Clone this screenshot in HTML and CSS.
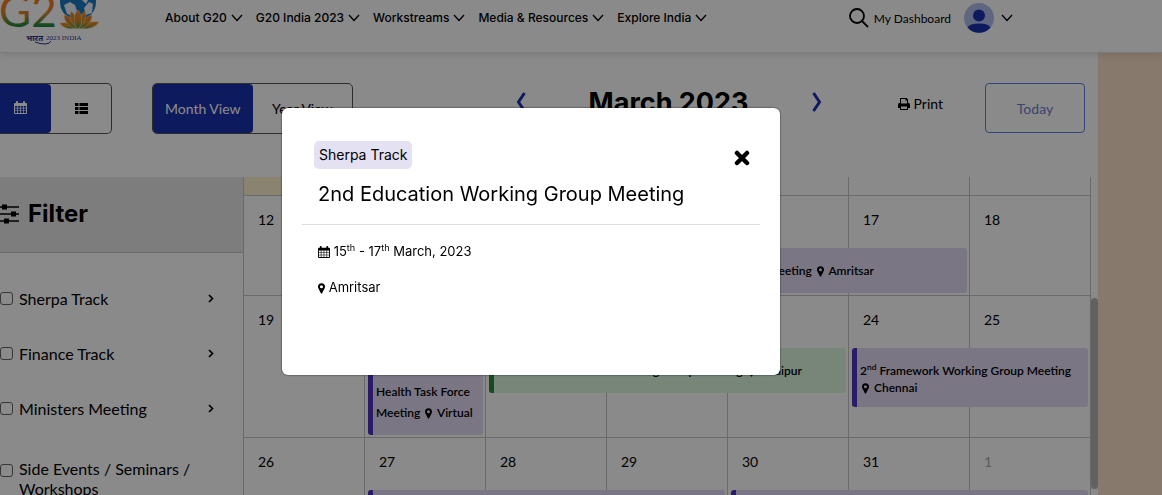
FILE: index.html
```
<!DOCTYPE html>
<html lang="en">
<head>
  <meta charset="UTF-8">
  <title>G20 Calendar</title>
  <link rel="stylesheet" href="styles.css">
</head>
<body>

<!-- shared icons -->
<svg class="sprite" width="0" height="0">
  <symbol id="chevron" viewBox="0 0 12 8"><path d="M1 1l5 5.500l5-5.500" fill="none" stroke="currentColor" stroke-width="1.300"/></symbol>
  <symbol id="pin" viewBox="0 0 8 12"><path fill-rule="evenodd" d="M4 0a4 4 0 0 1 4 4c0 1-.3 1.700-.7 2.400L4.700 11.500q-.7.900-1.400 0L.7 6.400C.3 5.700 0 5 0 4a4 4 0 0 1 4-4zM4 2.200a1.800 1.800 0 1 0 0 3.600a1.800 1.800 0 0 0 0-3.600z" fill="currentColor"/></symbol>
  <symbol id="calendar" viewBox="0 0 13 13"><path fill-rule="evenodd" d="M1 2h1V.8q0-.8 1-.8t1 .8V2h5V.8q0-.8 1-.8t1 .8V2h1q1 0 1 1v9q0 1-1 1H1q-1 0-1-1V3q0-1 1-1zM1 5v1.700h2V5zM3.700 5v1.700h2.400V5zM6.800 5v1.700h2.400V5zM9.900 5v1.700H12V5zM1 7.400v2h2v-2zM3.700 7.400v2h2.400v-2zM6.800 7.400v2h2.400v-2zM9.900 7.400v2H12v-2zM1 10.100V12h2v-1.900zM3.700 10.100V12h2.400v-1.900zM6.800 10.100V12h2.400v-1.900zM9.900 10.100V12H12v-1.900z" fill="currentColor"/></symbol>
  <symbol id="angle" viewBox="0 0 6 9"><path d="M1 1l3.500 3.500L1 8" fill="none" stroke="currentColor" stroke-width="1.700"/></symbol>
</svg>

<header class="header">
  <a href="#" class="logo" aria-label="G20 India">
    <svg width="104" height="50" viewBox="0 0 104 50">
      <defs>
        <linearGradient id="tricolor" gradientUnits="userSpaceOnUse" x1="0" y1="0" x2="0" y2="27">
          <stop offset="0" stop-color="#f47a20"/>
          <stop offset=".5" stop-color="#d88432"/>
          <stop offset="1" stop-color="#128a3a"/>
        </linearGradient>
        <linearGradient id="lotus" x1="0" y1="0" x2="0" y2="1">
          <stop offset="0" stop-color="#f58220"/>
          <stop offset=".6" stop-color="#c98a28"/>
          <stop offset="1" stop-color="#3f8a3a"/>
        </linearGradient>
      </defs>
      <text x="-1" y="27" class="logo-text" fill="url(#tricolor)">G2</text>
      <circle cx="78" cy="2" r="18" fill="#1a78c0"/>
      <path d="M64 5l6-3 5 3 2 6-3 5-7-2zM84 8l5-6 4 2-1 9-6 2zM82 0h6l-2 4z" fill="#e8f2fa"/>
      <g fill="url(#lotus)" stroke="#fbe6c4" stroke-width=".5">
        <path d="M78 28c-8 2-16 0-18-5c5-1 12 0 18 5z"/>
        <path d="M78 28c8 2 18 0 21-6c-6-1-15 0-21 6z"/>
        <path d="M77 29c-9-2-13-8-13-14c6 1 12 7 13 14z"/>
        <path d="M79 29c9-2 13-8 13-14c-6 1-12 7-13 14z"/>
        <path d="M78 29c-7-5-9-12-7-18c4 3 7 10 7 18z"/>
        <path d="M78 29c7-5 9-12 7-18c-4 3-7 10-7 18z"/>
        <path d="M78 29c-5-5-5-13 0-19c5 6 5 14 0 19z"/>
      </g>
      <text x="26" y="41" class="logo-hindi">भारत</text>
      <path d="M35 42q5 2 10 2t6-3" fill="none" stroke="#34308c"/>
      <text x="46" y="40" class="logo-sub">2023 INDIA</text>
    </svg>
  </a>
  <nav class="nav">
    <a href="#">About G20 <svg class="chev"><use href="#chevron"/></svg></a>
    <a href="#">G20 India 2023 <svg class="chev"><use href="#chevron"/></svg></a>
    <a href="#">Workstreams <svg class="chev"><use href="#chevron"/></svg></a>
    <a href="#">Media &amp; Resources <svg class="chev"><use href="#chevron"/></svg></a>
    <a href="#">Explore India <svg class="chev"><use href="#chevron"/></svg></a>
  </nav>
  <div class="account">
    <button class="plain" aria-label="Search">
      <svg width="20" height="20" viewBox="0 0 20 20" fill="none" stroke="#000" stroke-width="1.800"><circle cx="8" cy="8" r="7"/><path d="M13 13l6 6"/></svg>
    </button>
    <a href="#">My Dashboard</a>
    <button class="plain profile" aria-label="Profile">
      <svg width="30" height="30" viewBox="0 0 30 30"><circle cx="15" cy="15" r="15" fill="#aebfea"/><circle cx="15" cy="12.500" r="6" fill="#1a30ae"/><path d="M3.500 24.500q2-4 11.500-4t11.500 4a15 15 0 0 1-23 0z" fill="#1a30ae"/></svg>
      <svg class="chev"><use href="#chevron"/></svg>
    </button>
  </div>
</header>

<main class="page">
  <div class="toolbar">
    <div class="toggle layout-toggle">
      <button class="active" aria-label="Calendar"><svg width="13" height="13"><use href="#calendar"/></svg></button>
      <button aria-label="List"><svg width="13" height="11" viewBox="0 0 13 11"><path d="M0 0h3.500v3H0zM4.500 0H13v3H4.500zM0 4h3.500v3H0zM4.500 4H13v3H4.500zM0 8h3.500v3H0zM4.500 8H13v3H4.500z"/></svg></button>
    </div>
    <div class="toggle view-toggle">
      <button class="active">Month View</button>
      <button>Year View</button>
    </div>
    <div class="month">
      <button class="plain" aria-label="Previous"><svg width="10" height="20" viewBox="0 0 10 20"><path d="M8.500 1L2.500 10l6 9" fill="none" stroke="#1a30ae" stroke-width="3"/></svg></button>
      <h2>March 2023</h2>
      <button class="plain" aria-label="Next"><svg width="10" height="20" viewBox="0 0 10 20"><path d="M1.500 1l6 9-6 9" fill="none" stroke="#1a30ae" stroke-width="3"/></svg></button>
    </div>
    <button class="plain print">
      <svg width="12" height="12" viewBox="0 0 12 12"><path fill-rule="evenodd" d="M2 0h6.500L10 1.500V5h.5Q12 5 12 6.500V10h-2v2H2v-2H0V6.500Q0 5 1.500 5H2zM3 1v4.500h6V2.500H7.500V1zM3 8.500V11h6V8.500z"/></svg>
      Print
    </button>
    <button class="today">Today</button>
  </div>

  <div class="content">
    <aside class="filter">
      <h3>
        <svg width="19" height="20" viewBox="0 0 19 20"><path d="M0 3h19M0 10h19M0 17h19" stroke="#000" stroke-width="1.600"/><path d="M2 .5h5v5H2zM11 7.500h5v5h-5zM4 14.500h5v5H4z"/></svg>
        Filter
      </h3>
      <ul>
        <li><input type="checkbox" id="sherpa"><label for="sherpa">Sherpa Track</label><svg class="angle"><use href="#angle"/></svg></li>
        <li><input type="checkbox" id="finance"><label for="finance">Finance Track</label><svg class="angle"><use href="#angle"/></svg></li>
        <li><input type="checkbox" id="ministers"><label for="ministers">Ministers Meeting</label><svg class="angle"><use href="#angle"/></svg></li>
        <li class="tall"><input type="checkbox" id="side"><label for="side">Side Events / Seminars / Workshops</label></li>
      </ul>
    </aside>

    <section class="calendar">
      <div class="week week-end">
        <div class="day marked"></div><div class="day"></div><div class="day"></div><div class="day"></div><div class="day"></div><div class="day"></div><div class="day"></div>
      </div>
      <div class="week">
        <div class="day">12</div><div class="day">13</div><div class="day">14</div><div class="day">15</div><div class="day">16</div><div class="day">17</div><div class="day">18</div>
        <a href="#" class="event from-4 span-3 single">Education Working Group Meeting <svg class="pin"><use href="#pin"/></svg> Amritsar</a>
      </div>
      <div class="week week-mid">
        <div class="day">19</div><div class="day">20</div><div class="day">21</div><div class="day">22</div><div class="day">23</div><div class="day">24</div><div class="day">25</div>
        <a href="#" class="event loose from-2">Joint Finance Health Task Force Meeting <svg class="pin"><use href="#pin"/></svg> Virtual</a>
        <a href="#" class="event green from-3 span-3 single">Sustainable Finance Working Group Meeting <svg class="pin"><use href="#pin"/></svg> Udaipur</a>
        <a href="#" class="event from-6 span-2">2<sup>nd</sup> Framework Working Group Meeting <br><svg class="pin"><use href="#pin"/></svg> Chennai</a>
      </div>
      <div class="week">
        <div class="day">26</div><div class="day">27</div><div class="day">28</div><div class="day">29</div><div class="day">30</div><div class="day">31</div><div class="day other">1</div>
        <a href="#" class="event from-2 span-3" aria-label="Development Working Group Meeting"></a>
        <a href="#" class="event from-5 span-3" aria-label="Sherpa Meeting"></a>
      </div>
    </section>
    <div class="scrollbar"><div class="thumb"></div></div>
  </div>
</main>

<div class="overlay">
  <div class="modal" role="dialog" aria-labelledby="modal-title">
    <div class="modal-top">
      <span class="tag">Sherpa Track</span>
      <button class="plain close" aria-label="Close"><svg width="16" height="16" viewBox="0 0 16 16"><path d="M3 3l10 10M13 3L3 13" stroke="#000" stroke-width="4.500" stroke-linecap="round"/></svg></button>
    </div>
    <h4 id="modal-title">2nd Education Working Group Meeting</h4>
    <div class="modal-body">
      <p><svg width="12" height="12"><use href="#calendar"/></svg> 15<sup>th</sup> - 17<sup>th</sup> March, 2023</p>
      <p><svg class="pin"><use href="#pin"/></svg> Amritsar</p>
    </div>
  </div>
</div>

</body>
</html>
```
FILE: styles.css
```
* {
  box-sizing: border-box;
}
body {
  margin: 0;
  height: 100vh;
  display: flex;
  flex-direction: column;
  overflow: hidden;
  font-family: Lato, "Open Sans", sans-serif;
  font-size: 16px;
  color: #000;
  background: #fae2c8;
}
a {
  color: inherit;
  text-decoration: none;
}
button {
  font: inherit;
  color: inherit;
  cursor: pointer;
}
.plain {
  display: flex;
  align-items: center;
  padding: 0;
  border: none;
  background: none;
}
.sprite {
  position: absolute;
}
sup {
  font-size: 70%;
  line-height: 0;
}
.chev {
  width: 12px;
  height: 8px;
}
.pin {
  width: 7px;
  height: 11px;
  vertical-align: -2px;
}

/* header */
.header {
  display: flex;
  flex: none;
  height: 53px;
  background: #fff;
  border-bottom: 1px solid #e4e4e4;
  box-shadow: 0 2px 8px rgba(0,0,0,0.12);
  z-index: 1;
}
.logo {
  width: 165px;
}
.logo svg {
  display: block;
}
.logo-text {
  font: 44px Lato, sans-serif;
}
.logo-hindi {
  font: bold 8px "Noto Sans Devanagari", "Noto Sans", sans-serif;
  fill: #34308c;
}
.logo-sub {
  font: 7px "Liberation Serif", serif;
  fill: #34308c;
}
.nav {
  display: flex;
  gap: 13px;
  height: 35px;
  align-items: center;
  font: 500 12px Inter, sans-serif;
  white-space: nowrap;
}
.nav a {
  display: flex;
  align-items: center;
  gap: 4px;
}
.account {
  display: flex;
  align-items: center;
  gap: 5px;
  height: 36px;
  margin-left: auto;
  padding-right: 149px;
  font-size: 12px;
}
.profile {
  gap: 7px;
  margin-left: 8px;
}

/* toolbar */
.page {
  flex: 1;
  min-height: 0;
  display: flex;
  flex-direction: column;
  margin-right: 64px;
  background: #fff;
}
.toolbar {
  display: flex;
  align-items: flex-start;
  flex: none;
  height: 124px;
  padding: 30px 13px 0 0;
}
.toggle {
  display: flex;
  height: 51px;
  border: 1px solid #555;
  border-radius: 5px;
  font-size: 14px;
}
.toggle button {
  flex: 1;
  padding: 0;
  border: none;
  border-radius: 4px;
  background: none;
}
.toggle .active {
  background: #1a30ae;
  color: #fff;
}
.layout-toggle {
  width: 112px;
  margin-right: 40px;
  border-left: none;
  border-radius: 0 5px 5px 0;
}
.layout-toggle .active {
  flex: 0 0 51px;
  padding-right: 10px;
  border-radius: 0 4px 4px 0;
}
.view-toggle {
  width: 201px;
}
.month {
  display: flex;
  justify-content: space-between;
  align-items: center;
  width: 306px;
  height: 38px;
  margin-left: auto;
}
.month h2 {
  margin: 0;
  font: bold 27px Inter, sans-serif;
}
.print {
  gap: 4px;
  height: 41px;
  margin: 0 42px 0 76px;
  font-size: 14px;
}
.today {
  width: 100px;
  height: 50px;
  padding: 0;
  border: 1px solid #6280dc;
  border-radius: 4px;
  background: none;
  color: #6c80cc;
  font-size: 14px;
}

/* filter */
.content {
  display: flex;
  flex: 1;
  min-height: 0;
}
.filter {
  flex: 0 0 243px;
  overflow: hidden;
}
.filter h3 {
  display: flex;
  align-items: center;
  gap: 9px;
  height: 76px;
  margin: 0;
  padding-bottom: 2px;
  background: #e8e8e8;
  border-bottom: 1px solid #c4c4c4;
  font: bold 24px Inter, sans-serif;
}
.filter ul {
  margin: 0;
  padding: 18px 29px 0 0;
  list-style: none;
}
.filter li {
  display: flex;
  align-items: center;
  height: 55px;
}
.filter li.tall {
  height: auto;
  align-items: flex-start;
  margin-top: 23px;
}
.filter .tall input {
  margin-top: 5px;
}
.filter label {
  flex: 1;
  line-height: 20px;
}
.filter input {
  flex: none;
  appearance: none;
  width: 13px;
  height: 13px;
  margin: 0 6px 0 0;
  border: 1px solid #666;
  border-radius: 3px;
}
.angle {
  width: 6px;
  height: 9px;
}

/* calendar */
.calendar {
  flex: 1;
  min-width: 0;
  overflow: hidden;
  border-left: 1px solid #c4c4c4;
}
.week {
  display: grid;
  grid-template-columns: repeat(7, 1fr);
  grid-template-rows: 52px auto 1fr;
  align-items: start;
  min-height: 100px;
}
.week-end {
  grid-template-rows: 19px;
  min-height: 19px;
}
.week-mid {
  min-height: 142px;
}
.day {
  grid-row: 1 / -1;
  align-self: stretch;
  padding: 15px 14px;
  border-right: 1px solid #c4c4c4;
  border-bottom: 1px solid #c4c4c4;
  font-size: 14px;
}
.week-end .day {
  padding: 0;
}
.day:nth-child(1) { grid-column: 1; }
.day:nth-child(2) { grid-column: 2; }
.day:nth-child(3) { grid-column: 3; }
.day:nth-child(4) { grid-column: 4; }
.day:nth-child(5) { grid-column: 5; }
.day:nth-child(6) { grid-column: 6; }
.day:nth-child(7) { grid-column: 7; }
.marked {
  background: #fff3cf;
}
.other {
  color: #aaa;
}
.event {
  grid-row: 2;
  min-height: 45px;
  margin: 0 3px 2px 3px;
  padding: 14px 3px 11px;
  border-left: 5px solid #5030c0;
  border-radius: 3px;
  background: #e2dbf3;
  font-size: 12px;
  font-weight: 600;
  line-height: 17px;
}
.event .pin {
  margin: 0 2px;
}
.single {
  padding-left: 12px;
  white-space: nowrap;
}
.loose {
  padding: 12px 3px;
  line-height: 21px;
}
.green {
  border-color: #2f8a3a;
  background: #def8e2;
}
.from-2 { grid-column-start: 2; }
.from-3 { grid-column-start: 3; }
.from-4 { grid-column-start: 4; }
.from-5 { grid-column-start: 5; }
.from-6 { grid-column-start: 6; }
.span-2 { grid-column-end: span 2; }
.span-3 { grid-column-end: span 3; }

.scrollbar {
  width: 7px;
  padding-top: 121px;
}
.thumb {
  height: 191px;
  border-radius: 4px;
  background: #b4b4b4;
}

/* modal */
.overlay {
  position: fixed;
  inset: 0;
  z-index: 2;
  display: flex;
  justify-content: center;
  align-items: flex-start;
  padding: 108px 100px 0 0;
  background: rgba(0,0,0,0.46);
}
.modal {
  width: 498px;
  min-height: 267px;
  padding: 33px 20px;
  border-radius: 6px;
  background: #fff;
  box-shadow: 0 0 2px rgba(0,0,0,0.8);
  font-family: Inter, sans-serif;
  font-size: 13px;
}
.modal-top {
  display: flex;
  justify-content: space-between;
  align-items: center;
  padding: 0 10px 0 12px;
}
.tag {
  padding: 0 5px;
  border-radius: 5px;
  background: #e4e1f2;
  font-size: 14px;
  line-height: 28px;
}
.close {
  padding-top: 5px;
}
.modal h4 {
  margin: 0;
  padding: 10px 16px 15px;
  border-bottom: 1px solid #ddd;
  font-size: 20px;
  font-weight: normal;
  line-height: 30px;
}
.modal-body {
  padding: 16px;
}
.modal-body p {
  margin: 0 0 16px;
  line-height: 20px;
}
.modal-body svg {
  vertical-align: -2px;
}
```
